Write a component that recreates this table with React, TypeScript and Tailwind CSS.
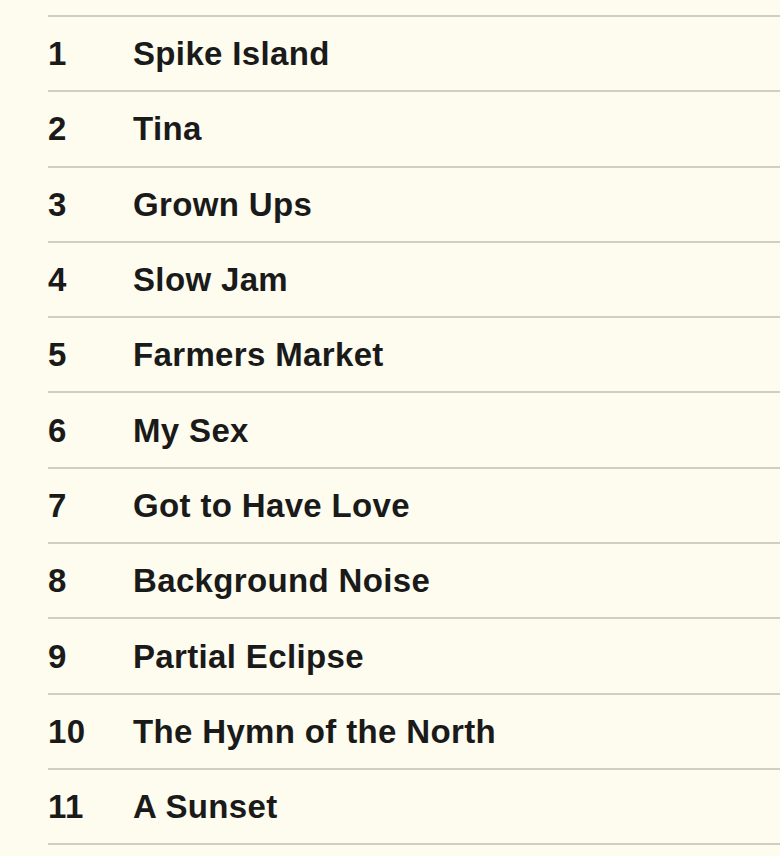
import React from "react";

const tracks = [
  "Spike Island",
  "Tina",
  "Grown Ups",
  "Slow Jam",
  "Farmers Market",
  "My Sex",
  "Got to Have Love",
  "Background Noise",
  "Partial Eclipse",
  "The Hymn of the North",
  "A Sunset",
];

export default function App() {
  return (
    <div
      className="w-[780px] h-[856px] bg-[#fdfcee] pt-[15px] pl-[48px] overflow-hidden"
      style={{ fontFamily: '"Liberation Sans", Arial, Helvetica, sans-serif' }}
    >
      <div className="border-t-2 border-[#cfcfc5]">
        {tracks.map((t, i) => (
          <div
            key={t}
            className="flex items-center h-[75.3px] border-b-2 border-[#cfcfc5] text-[33px] font-bold text-[#1a1a1a] tracking-[0.35px] leading-none"
          >
            <span className="w-[85px] shrink-0">{i + 1}</span>
            <span>{t}</span>
          </div>
        ))}
      </div>
    </div>
  );
}
